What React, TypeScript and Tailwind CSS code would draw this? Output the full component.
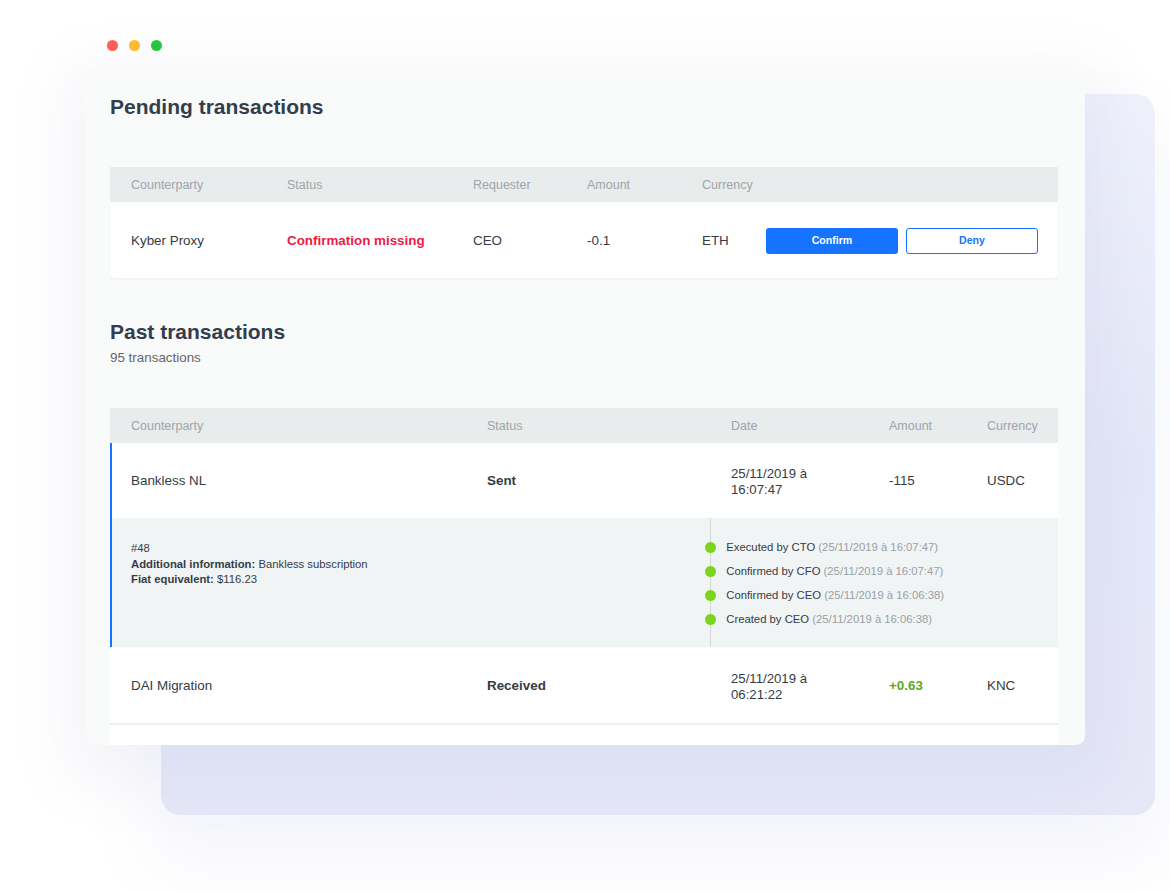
import React from 'react';

const pendingCols = 'grid grid-cols-[156px_186px_114px_115px_64px_1fr] items-center pl-[21px] pr-[20px]';
const pastCols = 'grid grid-cols-[356px_244px_158px_98px_1fr] items-center';

const timeline = [
  { label: 'Executed by CTO', date: '(25/11/2019 à 16:07:47)' },
  { label: 'Confirmed by CFO', date: '(25/11/2019 à 16:07:47)' },
  { label: 'Confirmed by CEO', date: '(25/11/2019 à 16:06:38)' },
  { label: 'Created by CEO', date: '(25/11/2019 à 16:06:38)' },
];

function TrafficLights() {
  return (
    <div className="relative flex gap-[11px] pt-[40px] pl-[107px]">
      <span className="w-[11px] h-[11px] rounded-full bg-[#ff5f57]" />
      <span className="w-[11px] h-[11px] rounded-full bg-[#ffbd2e]" />
      <span className="w-[11px] h-[11px] rounded-full bg-[#28c840]" />
    </div>
  );
}

function PendingTable() {
  return (
    <div>
      <div className={`${pendingCols} h-[35px] pt-[2px] bg-[#e8eced] text-[12.5px] text-[#9fa4a8]`}>
        <span>Counterparty</span>
        <span>Status</span>
        <span>Requester</span>
        <span>Amount</span>
        <span>Currency</span>
        <span />
      </div>
      <div className={`${pendingCols} h-[76px] pt-[2px] bg-white rounded-b-[4px] shadow-[0_1px_2px_rgba(0,0,0,0.05)] text-[13.4px] text-[#363c45]`}>
        <span>Kyber Proxy</span>
        <span className="font-bold text-[#ea1c44]">Confirmation missing</span>
        <span>CEO</span>
        <span>-0.1</span>
        <span>ETH</span>
        <div className="flex gap-[8px]">
          <button className="w-[132px] h-[26px] rounded-[3px] bg-[#1673ff] text-white text-[10.6px] font-bold">
            Confirm
          </button>
          <button className="w-[132px] h-[26px] rounded-[3px] bg-white border border-[#1673ff] text-[#1673ff] text-[10.6px] font-bold">
            Deny
          </button>
        </div>
      </div>
    </div>
  );
}

function DateCell({ day, time }: { day: string; time: string }) {
  return (
    <div className="flex flex-col text-[13.2px] leading-[16px]">
      <span>{day}</span>
      <span>{time}</span>
    </div>
  );
}

function PastTable() {
  return (
    <div>
      <div className={`${pastCols} pl-[21px] h-[35px] pt-[2px] bg-[#e8eced] text-[12.5px] text-[#9fa4a8]`}>
        <span>Counterparty</span>
        <span>Status</span>
        <span>Date</span>
        <span>Amount</span>
        <span>Currency</span>
      </div>

      <div className="border-l-2 border-[#1673ff]">
        <div className={`${pastCols} pl-[19px] h-[75px] pt-[2px] bg-white text-[13.4px] text-[#363c45]`}>
          <span>Bankless NL</span>
          <span className="font-bold">Sent</span>
          <DateCell day="25/11/2019 à" time="16:07:47" />
          <span>-115</span>
          <span>USDC</span>
        </div>
        <div className="flex h-[129px] bg-[#f1f4f5] text-[11.3px] text-[#363c45]">
          <div className="w-[596px] pl-[19px] pt-[23px] leading-[15.5px] flex flex-col">
            <span>#48</span>
            <span>
              <b>Additional information:</b> Bankless subscription
            </span>
            <span>
              <b>Fiat equivalent:</b> $116.23
            </span>
          </div>
          <div className="ml-[2px] border-l-[1.5px] border-[#d3d7d9] pt-[17px] flex flex-col">
            {timeline.map((t) => (
              <div key={t.label} className="h-[24px] flex items-center">
                <span className="w-[11px] h-[11px] -ml-[6.25px] rounded-full bg-[#7ed321]" />
                <span className="ml-[10.5px]">
                  {t.label} <span className="text-[#9a9fa4]">{t.date}</span>
                </span>
              </div>
            ))}
          </div>
        </div>
      </div>

      <div className={`${pastCols} pl-[21px] mt-[1px] h-[75px] pt-[2px] bg-white text-[13.4px] text-[#363c45]`}>
        <span>DAI Migration</span>
        <span className="font-bold">Received</span>
        <DateCell day="25/11/2019 à" time="06:21:22" />
        <span className="font-bold text-[#5ba91f]">+0.63</span>
        <span>KNC</span>
      </div>
      <div className="h-[2px] bg-[#edf1f1]" />
      <div className="h-[60px] bg-white" />
    </div>
  );
}

export default function App() {
  return (
    <div className="relative w-[1170px] h-[892px] bg-white overflow-hidden font-['Liberation_Sans',Arial,sans-serif]">
      {/* backing panel behind the window */}
      <div className="absolute left-[161px] top-[94px] w-[994px] h-[721px] rounded-[20px] bg-gradient-to-b from-[#eff1fc] via-[#e4e7f7] to-[#e6e8f8] shadow-[0_40px_70px_10px_rgba(120,125,200,0.07)]" />

      <TrafficLights />

      <div className="relative ml-[85px] mt-[16px] w-[1000px] h-[678px] bg-[#f9fafa] rounded-t-[4px] rounded-b-[9px] overflow-hidden shadow-[0_20px_60px_20px_rgba(110,115,190,0.07)]">
        <div className="px-[25px] pt-[26px] pr-[27px]">
          <h2 className="text-[21px] leading-[28px] font-bold text-[#333d4e]">Pending transactions</h2>
          <div className="mt-[46px]">
            <PendingTable />
          </div>

          <h2 className="mt-[40px] text-[21px] leading-[28px] font-bold text-[#333d4e]">Past transactions</h2>
          <p className="mt-[4px] text-[13.4px] leading-[16px] text-[#62676e]">95 transactions</p>

          <div className="mt-[42px]">
            <PastTable />
          </div>
        </div>
      </div>
    </div>
  );
}
